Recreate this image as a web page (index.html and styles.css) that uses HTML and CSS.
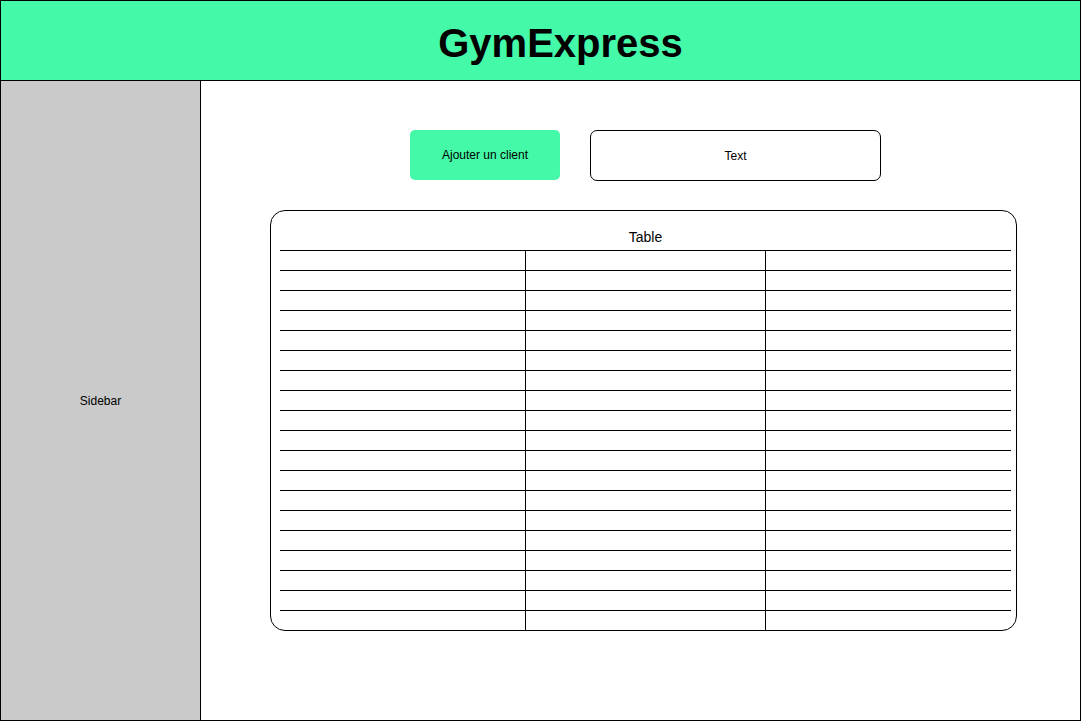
FILE: index.html
```html
<!DOCTYPE html>
<html lang="fr">
<head>
<meta charset="utf-8">
<title>GymExpress</title>
<link rel="stylesheet" href="styles.css">
</head>
<body>
<div class="app">
  <header class="topbar"><h1 class="brand">GymExpress</h1></header>
  <div class="main">
    <aside class="sidebar">Sidebar</aside>
    <section class="content">
      <div class="actions">
        <button class="btn-add">Ajouter un client</button>
        <div class="text-box">Text</div>
      </div>
      <div class="table-card">
        <div class="table-title">Table</div>
        <div class="grid">
          <div class="row"><div></div><div></div><div></div></div>
          <div class="row"><div></div><div></div><div></div></div>
          <div class="row"><div></div><div></div><div></div></div>
          <div class="row"><div></div><div></div><div></div></div>
          <div class="row"><div></div><div></div><div></div></div>
          <div class="row"><div></div><div></div><div></div></div>
          <div class="row"><div></div><div></div><div></div></div>
          <div class="row"><div></div><div></div><div></div></div>
          <div class="row"><div></div><div></div><div></div></div>
          <div class="row"><div></div><div></div><div></div></div>
          <div class="row"><div></div><div></div><div></div></div>
          <div class="row"><div></div><div></div><div></div></div>
          <div class="row"><div></div><div></div><div></div></div>
          <div class="row"><div></div><div></div><div></div></div>
          <div class="row"><div></div><div></div><div></div></div>
          <div class="row"><div></div><div></div><div></div></div>
          <div class="row"><div></div><div></div><div></div></div>
          <div class="row"><div></div><div></div><div></div></div>
          <div class="row"><div></div><div></div><div></div></div>
        </div>
      </div>
    </section>
  </div>
</div>
</body>
</html>
```
FILE: styles.css
```css
* { box-sizing: border-box; }
html, body { margin: 0; padding: 0; background: #fff; }
body { font-family: "Liberation Sans", Arial, Helvetica, sans-serif; color: #000; }

.app {
  width: 1081px;
  height: 721px;
  border: 1px solid #000;
  display: flex;
  flex-direction: column;
}

.topbar {
  height: 80px;
  flex: none;
  background: #44f9a8;
  border-bottom: 1px solid #000;
  display: flex;
  align-items: center;
  justify-content: center;
  padding-left: 40px;
}
.brand {
  margin: 0;
  font-size: 40px;
  font-weight: bold;
  line-height: 1;
  padding-top: 4px;
}

.main { flex: 1; display: flex; min-height: 0; }

.sidebar {
  width: 200px;
  flex: none;
  background: #cacaca;
  border-right: 1px solid #000;
  display: flex;
  align-items: center;
  justify-content: center;
  font-size: 12px;
  padding-top: 1px;
}

.content {
  flex: 1;
  padding-top: 49px;
  padding-left: 69px;
}

.actions {
  display: flex;
  gap: 30px;
  margin-left: 140px;
  height: 51px;
}
.btn-add {
  width: 150px;
  height: 50px;
  border: none;
  border-radius: 5px;
  background: #44f9a8;
  font-family: inherit;
  font-size: 12px;
  color: #000;
  padding: 0;
}
.text-box {
  width: 291px;
  height: 51px;
  border: 1px solid #000;
  border-radius: 7px;
  display: flex;
  align-items: center;
  justify-content: center;
  font-size: 12px;
}

.table-card {
  margin-top: 29px;
  width: 747px;
  height: 421px;
  border: 1px solid #000;
  border-radius: 15px;
  padding: 0 5px 0 9px;
  display: flex;
  flex-direction: column;
}
.table-title {
  height: 39px;
  font-size: 14px;
  display: flex;
  align-items: center;
  justify-content: center;
  padding-top: 13px;
}
.grid { flex: 1; display: flex; flex-direction: column; }
.row {
  height: 20px;
  border-top: 1px solid #000;
  display: grid;
  grid-template-columns: 245px 240px 1fr;
}
.row > div + div { border-left: 1px solid #000; }
```
